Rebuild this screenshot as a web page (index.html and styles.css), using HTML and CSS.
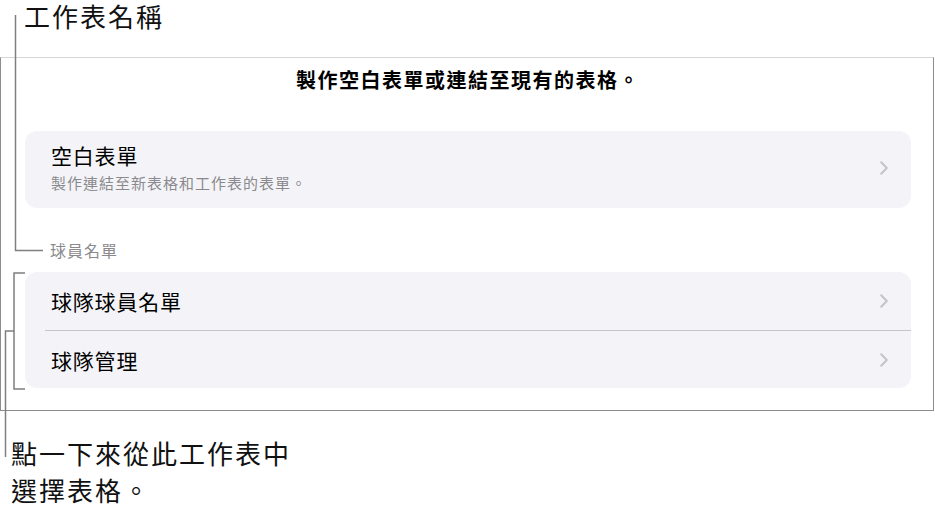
FILE: index.html
```html
<!DOCTYPE html>
<html lang="zh-Hant">
<head>
  <meta charset="UTF-8" />
  <title>表單</title>
  <link rel="stylesheet" href="styles.css">
</head>
<body>
  <div class="figure">
    <div class="note note-top">工作表名稱</div>

    <div class="panel">
      <div class="panel-title">製作空白表單或連結至現有的表格。</div>

      <div class="card">
        <div class="row row-tall">
          <div class="row-text">
            <div class="row-name">空白表單</div>
            <div class="row-sub">製作連結至新表格和工作表的表單。</div>
          </div>
          <svg class="chev" width="8" height="14" viewBox="0 0 8 14"><path d="M1.2 1.2 L6.8 7 L1.2 12.8" /></svg>
        </div>
      </div>

      <div class="section-label">球員名單</div>

      <div class="card">
        <div class="row">
          <div class="row-name">球隊球員名單</div>
          <svg class="chev" width="8" height="14" viewBox="0 0 8 14"><path d="M1.2 1.2 L6.8 7 L1.2 12.8" /></svg>
        </div>
        <div class="sep"></div>
        <div class="row">
          <div class="row-name">球隊管理</div>
          <svg class="chev" width="8" height="14" viewBox="0 0 8 14"><path d="M1.2 1.2 L6.8 7 L1.2 12.8" /></svg>
        </div>
      </div>
    </div>

    <div class="note note-bottom">點一下來從此工作表中<br>選擇表格。</div>

    <svg class="leaders" width="935" height="513" viewBox="0 0 935 513">
      <path d="M15.5 15 V250.5 H43" />
      <path d="M25 273 H14 V389 H25" />
      <path d="M14 331 H5.5 V457" />
    </svg>
  </div>
</body>
</html>
```

FILE: styles.css
```css
* { box-sizing: border-box; }

html, body {
  margin: 0; padding: 0;
  background: #fff; color: #000;
  font-family: "Noto Sans CJK TC", "Noto Sans", sans-serif;
}

.figure {
  position: relative;
  width: 935px;
  height: 513px;
  overflow: hidden;
}

.note {
  font-size: 26px;
  letter-spacing: 2px;
  color: #111;
}

.note-top {
  height: 57px;
  padding-top: 2px;
  line-height: 28px;
  padding-left: 24px;
}

.note-bottom {
  margin-top: 23px;
  line-height: 37px;
  padding-left: 11px;
}

.panel {
  width: 934px;
  border: 1px solid #8c8c8c;
  border-top-color: #d6d6d6;
  padding: 0 22px 22px 24px;
}

.panel-title {
  padding-top: 10px;
  margin-bottom: 39px;
  line-height: 24px;
  font-size: 20px;
  font-weight: 700;
  letter-spacing: 1.5px;
  text-align: center;
}

.card {
  background: #f4f4f8;
  border-radius: 12px;
}

.row {
  display: flex;
  align-items: center;
  justify-content: space-between;
  height: 58px;
  padding: 0 23px 0 26px;
}

.row + .sep + .row { height: 57px; }

.row-tall {
  height: auto;
  padding-top: 12px;
  padding-bottom: 15px;
}

.row-name {
  font-size: 21px;
  line-height: 24px;
  letter-spacing: 0.8px;
}

.row-sub {
  margin-top: 6px;
  font-size: 15px;
  line-height: 20px;
  letter-spacing: 1px;
  color: #8a8a8e;
}

.sep {
  height: 1px;
  margin-left: 20px;
  background: #c6c6c8;
}

.chev path {
  fill: none;
  stroke: #c4c4c7;
  stroke-width: 2;
  stroke-linecap: round;
  stroke-linejoin: round;
}

.section-label {
  margin: 32px 0 12px;
  padding-left: 25px;
  font-size: 16px;
  line-height: 20px;
  letter-spacing: 1px;
  color: #8a8a8e;
}

.leaders {
  position: absolute;
  top: 0; left: 0;
  pointer-events: none;
}

.leaders path {
  fill: none;
  stroke: #7f7f7f;
  stroke-width: 1.5;
}
```
